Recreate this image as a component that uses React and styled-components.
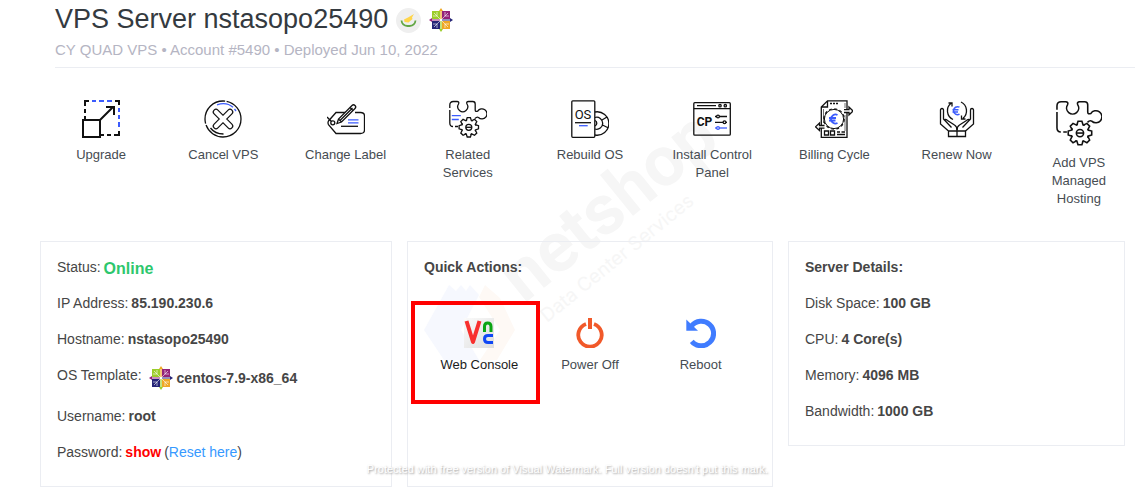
import styled, { createGlobalStyle } from 'styled-components';

const GlobalStyle = createGlobalStyle`
  * {
    box-sizing: border-box;
  }
  body {
    margin: 0;
    background-color: #fff;
    color: #464646;
    font-family: 'Liberation Sans', Arial, sans-serif;
    font-size: 13px;
    overflow-x: hidden;
  }
  a {
    color: inherit;
    text-decoration: none;
  }
  svg {
    display: block;
    flex-shrink: 0;
  }
`;

const Page = styled.main`
  position: relative;
  isolation: isolate;
  overflow-x: clip;
`;

const Header = styled.header`
  margin-left: 55px;
  padding-bottom: 7px;
  border-bottom: 1px solid #ebedf2;
`;

const TitleRow = styled.div`
  display: flex;
  align-items: center;
  gap: 8px;
  height: 40px;
`;

const Title = styled.h1`
  margin: 0;
  color: #343a40;
  font-size: 27px;
  font-weight: 400;
  line-height: 38px;
  height: 40px;
`;

const Subtitle = styled.p`
  margin: 0;
  color: #b5b5c3;
  font-size: 15px;
  line-height: 20px;
`;

const FlagBadge = styled.span`
  display: flex;
  align-items: center;
  justify-content: center;
  width: 25px;
  height: 25px;
  border-radius: 50%;
  background-color: #efefef;
`;

const Toolbar = styled.nav`
  display: grid;
  grid-template-columns: repeat(9, 1fr);
  margin: 32px -5px 33px 40px;
`;

const Tool = styled.a`
  display: flex;
  flex-direction: column;
  align-items: center;
  gap: 8px;
  padding: 0 16px;
  color: #464c52;
  line-height: 18px;
  text-align: center;
`;

const ActionLink = styled(Tool)`
  padding: 0;
  color: ${({ $active }) => ($active ? '#1b1b1b' : '#464c52')};
`;

const Cards = styled.div`
  display: grid;
  grid-template-columns: 352fr 366fr 337fr;
  align-items: start;
  gap: 15px;
  margin: 0 10px 0 40px;
`;

const Card = styled.section`
  align-self: ${({ $fill }) => ($fill ? 'stretch' : 'start')};
  padding: 15px 16px 8px;
  border: 1px solid #ebedf2;
`;

const CardTitle = styled.h2`
  margin: 0 0 16px;
  font-size: 14px;
  font-weight: 700;
  line-height: 20px;
`;

const Row = styled.div`
  display: flex;
  gap: 3px;
  margin-bottom: 16px;
  font-size: 14px;
  line-height: 20px;
`;

const Status = styled.strong`
  height: 20px;
  color: #2dc76d;
  font-size: 16px;
  line-height: 24px;
`;

const Template = styled.strong`
  display: flex;
  align-items: center;
  gap: 4px;
  height: 25px;
  margin-left: 4px;
`;

const ShowButton = styled.button`
  padding: 0;
  border: 0;
  background: none;
  color: #f00;
  font: inherit;
  font-weight: 700;
  cursor: pointer;
`;

const ResetLink = styled.a`
  color: #3699ff;
`;

const Actions = styled.div`
  display: grid;
  grid-template-columns: repeat(3, 1fr);
  margin-top: 41px;
`;

const ActionCell = styled.div`
  position: relative;
`;

const Highlight = styled.span`
  position: absolute;
  top: -17px;
  left: 50%;
  width: 129px;
  height: 103px;
  margin-left: -68px;
  border: 4px solid #f00;
  pointer-events: none;
`;

const Watermark = styled.svg`
  position: absolute;
  top: 90px;
  left: 50%;
  z-index: -1;
  margin-left: -168px;
  overflow: visible;
  pointer-events: none;
`;

const Notice = styled.p`
  position: absolute;
  right: 0;
  bottom: 10px;
  left: 0;
  margin: 0;
  color: #fff;
  font-size: 11px;
  line-height: 16px;
  text-align: center;
  text-shadow: 1px 1px 2px #999;
  pointer-events: none;
`;

const BLUE = '#3b5bfd';

function Icon({ size = 38, children }) {
  return (
    <svg
      width={size}
      height={size}
      viewBox='0 0 38 38'
      fill='none'
      stroke='#111'
      strokeWidth='1.3'
      aria-hidden='true'
    >
      {children}
    </svg>
  );
}

function UpgradeIcon() {
  return (
    <Icon>
      <g strokeWidth='2'>
        <path d='M3 6V1h4M3 9v4M3 16v4M33 1h4v4M37 31v4h-5M29 35h-4M22 35h-3' />
        <path d='M10 1h4M17 1h5M25 1h5M37 8v4M37 15v4M37 22v5' stroke={BLUE} />
        <path d='M1 20h17v17H1zM18 20 31 7M24 7h8v8' />
      </g>
    </Icon>
  );
}

function CancelIcon() {
  return (
    <Icon>
      <circle cx='19' cy='19' r='18' strokeDasharray='50 1.5 35 1.5' />
      <path d='m12 12 14 14M26 12 12 26' strokeWidth='6.6' strokeLinecap='round' />
      <path d='m12 12 14 14M26 12 12 26' stroke='#fff' strokeWidth='4.2' strokeLinecap='round' />
      <path d='M13 4.800c6-2 12-1 16 2.500M30.500 9l1.500 2' stroke={BLUE} />
      <path d='M6.500 28c3 4 7.500 6 13 6' />
    </Icon>
  );
}

function LabelIcon() {
  return (
    <Icon>
      <path d='M19 12.500H9L1.500 21q-1 1.800 0 3.600l7.500 8.900h24.500q4 0 4-3.500V16q0-3.500-4-3.500H28' />
      <circle cx='5.800' cy='22.800' r='2' />
      <path d='m0 17 4.500 4.500' />
      <path
        d='m10 23.500 1.500-4.500L25 5.500q1.500-1.500 3 0t0 3L14.500 22zM11.500 19l3 3M23 7.500l3 3M13 20.500 25.500 8'
        fill='#fff'
      />
      <path d='M21 19.800h10.500M21 22.800h10.500' stroke={BLUE} />
      <path d='M14 26.300h17' />
    </Icon>
  );
}

const GEAR_TEETH = [0, 45, 90, 135, 180, 225, 270, 315];

function PuzzleIcon({ size, lines }) {
  return (
    <Icon size={size}>
      <path d='M.800 8V5q0-3.500 3.500-3.500H8q2.500 0 1.500 2.500a5 5 0 1 0 8.500 0Q17 1.500 19.500 1.500h4.200q2.500 0 2.500 2.500v6q0 2 2.500 1.200a5 5 0 1 1 .800 6.300q-1.500-1-3.500 1' />
      <path d='M.800 10v13q0 3.500 3.200 3.500M6 26.500h3' />
      {GEAR_TEETH.map((angle) => (
        <path
          key={angle}
          d='M17.200 20.700l1-3.100h3.200l1 3.100q1 .100 1.200.500'
          transform={`rotate(${angle} 19.800 27.300)`}
        />
      ))}
      <circle cx='19.800' cy='27.300' r='3' />
      <path d='M17 27.300h5.600' />
      {lines && <path d='M2.800 15.700h9M2.800 19.500h7' stroke={BLUE} />}
    </Icon>
  );
}

function RebuildIcon() {
  return (
    <Icon>
      <rect x='.8' y='.8' width='23' height='36.500' rx='1' />
      <text
        x='12'
        y='19'
        fill='#111'
        stroke='none'
        fontFamily='Roboto, sans-serif'
        fontSize='13'
        textAnchor='middle'
      >
        OS
      </text>
      <path d='M4 22.700h16' />
      <path d='M8 25.700h8.700' stroke={BLUE} />
      <path d='M24 12a11.700 11.700 0 1 1 0 23M24 17.500a6 6 0 1 1 0 11.500M24 20.500a3 3 0 0 1 0 5.500M31 20l5-3M31.500 25l5 2.500' />
    </Icon>
  );
}

function PanelIcon() {
  return (
    <Icon>
      <rect x='.8' y='2.7' width='36.5' height='32.5' rx='1' />
      <path d='M.800 8.700h36.500M4 5.700h19' />
      <circle cx='27' cy='5.7' r='1.2' />
      <circle cx='32.3' cy='5.7' r='1.2' />
      <text
        x='11.5'
        y='26'
        fill='#111'
        stroke='none'
        fontFamily='Roboto, sans-serif'
        fontSize='12'
        fontWeight='700'
        textAnchor='middle'
      >
        CP
      </text>
      <path d='M22 16.500h12M22 22.300h12' />
      <path d='M22 28h12' stroke={BLUE} />
      <circle cx='25' cy='16.5' r='1.4' fill='#fff' />
      <circle cx='31.5' cy='22.3' r='1.4' fill='#fff' />
      <circle cx='25' cy='28' r='1.4' fill='#fff' stroke={BLUE} />
    </Icon>
  );
}

function BillingIcon() {
  return (
    <Icon>
      <path d='M12.500.800H32v36.500H6.300V7zM12.500.800V7H6.300' />
      <path d='M15 3.500h9' strokeDasharray='2 1' />
      <path d='M8.500 9v14M30 3v5M30 15v16' strokeWidth='.6' />
      <circle cx='19' cy='19' r='9.3' fill='#fff' stroke='none' />
      <circle cx='19' cy='19' r='9.6' strokeWidth='1' />
      <circle cx='19' cy='19' r='10.2' strokeWidth='1.2' strokeDasharray='2.8 2.54' />
      <path
        d='M22.500 15a4.500 4.500 0 1 0 0 8M14 18h7M14 20.500h6.500'
        stroke={BLUE}
        strokeWidth='1.8'
      />
      <path
        d='M29 9.700h5V7l4 4-4 4v-2.500h-5M9.500 25.500H4.500V23l-4 3.800 4 3.800v-2.500h5'
        fill='#fff'
      />
      <path d='M9.500 31h4v4h-4zM15.500 31h4v4h-4zM22 32h3M26.500 32H30M22 34.500h8' />
    </Icon>
  );
}

function RenewIcon() {
  return (
    <Icon>
      <path d='M15 19.500A9.700 9.700 0 0 1 13 3.200M10.500 3h3.500v3.500M23 2a9.700 9.700 0 0 1 2 16.200M27.500 19H23.500v-3.500' />
      <path
        d='M21.500 7.200a4 4 0 1 0 0 7M14.500 9.700h6M14.500 12h5.500'
        stroke={BLUE}
        strokeWidth='1.5'
      />
      <path d='M10.500 31h17v5.500h-17zM19 27v9.500M10.500 31 2.500 24V10q0-1.500 1.500-1.500T5.500 10v9l8 8.500M5.500 20q2-1.500 4 .500l7 4.500q2.500 1.500 2.500 5' />
      <path d='m27.500 31 8-7V10q0-1.500-1.500-1.500T32.500 10v9l-8 8.500M32.500 20q-2-1.500-4 .500l-7 4.500Q19 26.500 19 30' />
    </Icon>
  );
}

function CentosLogo() {
  return (
    <svg width='24' height='24' viewBox='0 0 24 24' aria-hidden='true'>
      <path d='M3 3h8v8H3z' fill='#9ccd2a' />
      <path d='M13 3h8v8h-8z' fill='#932279' />
      <path d='M3 13h8v8H3z' fill='#262577' />
      <path d='M13 13h8v8h-8z' fill='#efa724' />
      <g stroke='#fff' strokeWidth='.6' fill='none'>
        <path d='m5 5 14 14M19 5 5 19' />
        <path d='M8 4v4H4M16 4v4h4M8 20v-4H4M16 20v-4h4' />
      </g>
      <path d='M11.400 11V3H10l2-3 2 3h-1.400v8z' fill='#efa724' />
      <path d='M13 11.400h8V10l3 2-3 2v-1.400h-8z' fill='#262577' />
      <path d='M11.400 13v8H10l2 3 2-3h-1.400v-8z' fill='#9ccd2a' />
      <path d='M11 11.400H3V10l-3 2 3 2v-1.400h8z' fill='#932279' />
    </svg>
  );
}

function CyprusFlag() {
  return (
    <FlagBadge>
      <svg width='17' height='15' viewBox='0 0 17 15' role='img' aria-label='Cyprus'>
        <path d='M4 6.500 8 4.500 14 1l-2 3.500.500 1.500-4 3.500-4-.500z' fill='#ffd54a' />
        <path
          d='M1.500 7.500q.500 5 6 5.500M15.500 7.500q-.500 5-6 5.500M6.500 13h4'
          fill='none'
          stroke='#62a744'
          strokeWidth='1.8'
        />
      </svg>
    </FlagBadge>
  );
}

function VncIcon() {
  return (
    <svg width='30' height='30' viewBox='0 0 30 30' aria-hidden='true'>
      <defs>
        <linearGradient id='vnc-bg' x1='0' y1='0' x2='1' y2='1'>
          <stop offset='0' stopColor='#fafafa' />
          <stop offset='1' stopColor='#dedede' />
        </linearGradient>
      </defs>
      <rect width='30' height='30' fill='url(#vnc-bg)' />
      <g fill='none' strokeWidth='3'>
        <path d='m2.500 3 6.500 21L15.500 3' stroke='#f8302e' strokeWidth='4' strokeLinejoin='round' />
        <path d='M20.500 14V8.500q0-3.500 3.200-3.500T27 8.500V14' stroke='#0ba514' />
        <path d='M29 17.500h-5q-3.500 0-3.500 3.500t3.500 3.500h5' stroke='#1047f5' />
      </g>
    </svg>
  );
}

function PowerIcon() {
  return (
    <svg width='30' height='30' viewBox='0 0 30 30' fill='none' aria-hidden='true'>
      <path d='M11 6a11.700 11.700 0 1 0 8 0' stroke='#f1592a' strokeWidth='3.8' />
      <path d='M15 0v11' stroke='#f1592a' strokeWidth='4' />
    </svg>
  );
}

function RebootIcon() {
  return (
    <svg width='30' height='30' viewBox='0 0 30 30' fill='none' aria-hidden='true'>
      <path d='M5.500 8a12.300 12.300 0 1 1 .300 15.300' stroke='#407cff' strokeWidth='5' />
      <path d='M.300 1.500v11.300h11.700z' fill='#407cff' />
    </svg>
  );
}

const tools = [
  { label: 'Upgrade', icon: <UpgradeIcon /> },
  { label: 'Cancel VPS', icon: <CancelIcon /> },
  { label: 'Change Label', icon: <LabelIcon /> },
  { label: 'Related Services', icon: <PuzzleIcon lines /> },
  { label: 'Rebuild OS', icon: <RebuildIcon /> },
  { label: 'Install Control Panel', icon: <PanelIcon /> },
  { label: 'Billing Cycle', icon: <BillingIcon /> },
  { label: 'Renew Now', icon: <RenewIcon /> },
  { label: 'Add VPS Managed Hosting', icon: <PuzzleIcon size={46} /> },
];

const actions = [
  { label: 'Web Console', icon: <VncIcon />, active: true },
  { label: 'Power Off', icon: <PowerIcon /> },
  { label: 'Reboot', icon: <RebootIcon /> },
];

const details = [
  ['Disk Space:', '100 GB'],
  ['CPU:', '4 Core(s)'],
  ['Memory:', '4096 MB'],
  ['Bandwidth:', '1000 GB'],
];

function BrandWatermark() {
  return (
    <Watermark width='350' height='290' aria-hidden='true'>
      <path d='m24 240 25-45 7 6 5-6 5 6 4-6 9 10-18 35 18 30H44z' fill='#f6f8fe' />
      <path d='m79 207 6-12 15 13 15 32-18 30H80l20-30z' fill='#fef9f5' />
      <g transform='translate(124 214) rotate(-39)' fill='#f6f6f6'>
        <text fontFamily='Roboto, sans-serif' fontSize='70' fontWeight='700'>
          netshop
        </text>
      </g>
      <g transform='translate(147 233) rotate(-39)' fill='#f6f6f6'>
        <text fontFamily='Inter, sans-serif' fontSize='19'>
          Data Center Services
        </text>
      </g>
    </Watermark>
  );
}

export default function App() {
  return (
    <Page>
      <GlobalStyle />
      <BrandWatermark />
      <Header>
        <TitleRow>
          <Title>VPS Server nstasopo25490</Title>
          <CyprusFlag />
          <CentosLogo />
        </TitleRow>
        <Subtitle>CY QUAD VPS • Account #5490 • Deployed Jun 10, 2022</Subtitle>
      </Header>
      <Toolbar>
        {tools.map(({ label, icon }) => (
          <Tool href='#' key={label}>
            {icon}
            {label}
          </Tool>
        ))}
      </Toolbar>
      <Cards>
        <Card>
          <Row>
            Status: <Status>Online</Status>
          </Row>
          <Row>
            IP Address: <strong>85.190.230.6</strong>
          </Row>
          <Row>
            Hostname: <strong>nstasopo25490</strong>
          </Row>
          <Row>
            OS Template:
            <Template>
              <CentosLogo />
              centos-7.9-x86_64
            </Template>
          </Row>
          <Row>
            Username: <strong>root</strong>
          </Row>
          <Row>
            Password: <ShowButton type='button'>show</ShowButton>
            <span>
              (<ResetLink href='#'>Reset here</ResetLink>)
            </span>
          </Row>
        </Card>
        <Card $fill>
          <CardTitle>Quick Actions:</CardTitle>
          <Actions>
            {actions.map(({ label, icon, active }) => (
              <ActionCell key={label}>
                <ActionLink href='#' $active={active}>
                  {icon}
                  {label}
                </ActionLink>
                {active && <Highlight />}
              </ActionCell>
            ))}
          </Actions>
        </Card>
        <Card>
          <CardTitle>Server Details:</CardTitle>
          {details.map(([name, value]) => (
            <Row key={name}>
              {name} <strong>{value}</strong>
            </Row>
          ))}
        </Card>
      </Cards>
      <Notice>
        Protected with free version of Visual Watermark. Full version doesn't put this mark.
      </Notice>
    </Page>
  );
}
